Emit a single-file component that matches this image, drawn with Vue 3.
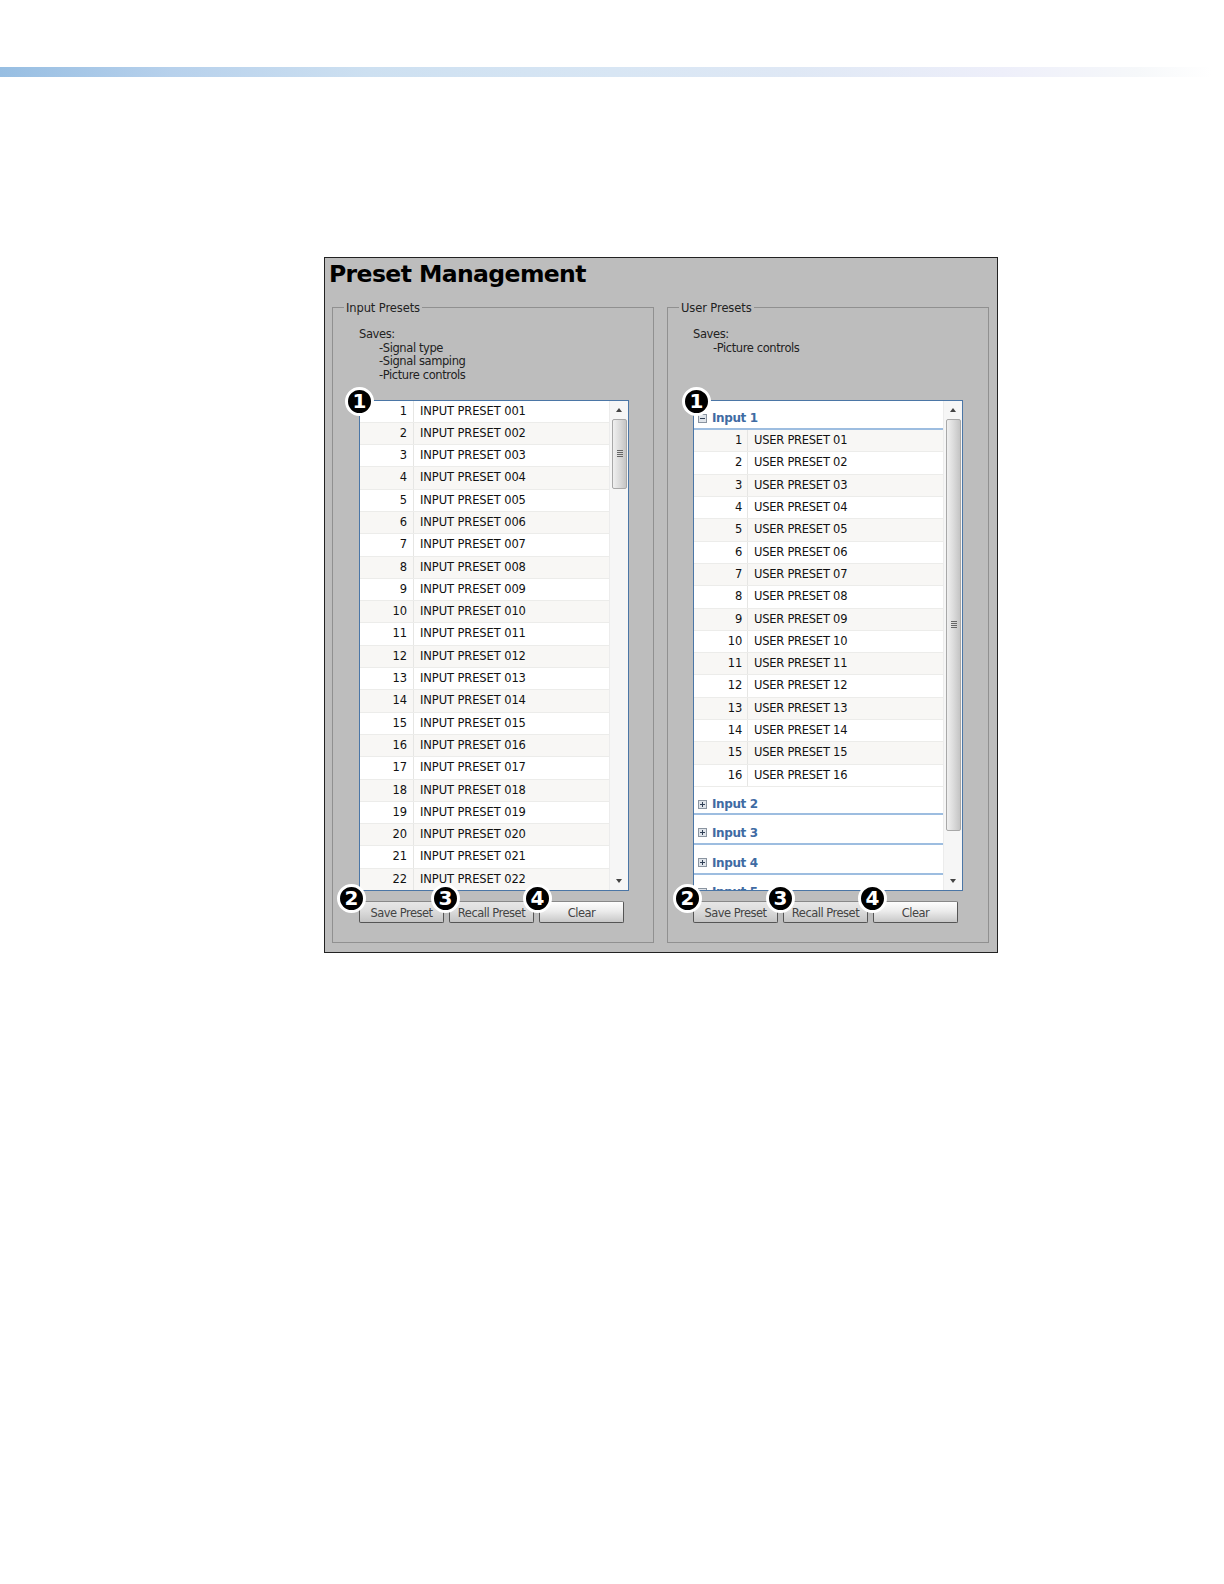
<script setup>
const inputRows = Array.from({ length: 22 }, (_, i) => ({ n: i + 1, name: 'INPUT PRESET ' + String(i + 1).padStart(3, '0') }))
const userRows = Array.from({ length: 16 }, (_, i) => ({ n: i + 1, name: 'USER PRESET ' + String(i + 1).padStart(2, '0') }))
const closedGroups = ['Input 2', 'Input 3', 'Input 4', 'Input 5']
const buttons = [
  { label: 'Save Preset', badge: 2 },
  { label: 'Recall Preset', badge: 3 },
  { label: 'Clear', badge: 4 }
]
</script>

<template>
  <div class="page">
    <div class="bar"></div>
    <section class="panel">
      <h1 class="title">Preset Management</h1>
      <div class="columns">
        <fieldset class="group">
          <legend>Input Presets</legend>
          <div class="saves">
            <div>Saves:</div>
            <div class="ind">-Signal type</div>
            <div class="ind">-Signal samping</div>
            <div class="ind">-Picture controls</div>
          </div>
          <div class="list">
            <span class="badge badge-list">1</span>
            <div class="rows">
              <div v-for="r in inputRows" :key="r.n" class="row">
                <span class="num">{{ r.n }}</span>
                <span class="name">{{ r.name }}</span>
              </div>
            </div>
            <div class="scroll">
              <span class="arrow up"></span>
              <div class="thumb thumb-short"><span class="grip"></span></div>
              <span class="arrow down"></span>
            </div>
          </div>
          <div class="buttons">
            <div v-for="b in buttons" :key="b.label" class="btn-wrap">
              <span class="badge badge-btn">{{ b.badge }}</span>
              <button class="btn" type="button">{{ b.label }}</button>
            </div>
          </div>
        </fieldset>

        <fieldset class="group">
          <legend>User Presets</legend>
          <div class="saves">
            <div>Saves:</div>
            <div class="ind">-Picture controls</div>
          </div>
          <div class="list">
            <span class="badge badge-list">1</span>
            <div class="rows">
              <div class="tree-head">
                <svg class="tree-icon" viewBox="0 0 9 9" width="9" height="9">
                  <rect x="0.5" y="0.5" width="8" height="8" fill="#dfe4ea" stroke="#8a94a0" />
                  <path d="M2 4.5H7" stroke="#2f3f55" />
                </svg>
                Input 1
              </div>
              <div v-for="r in userRows" :key="r.n" class="row">
                <span class="num">{{ r.n }}</span>
                <span class="name">{{ r.name }}</span>
              </div>
              <div v-for="g in closedGroups" :key="g" class="tree-head">
                <svg class="tree-icon" viewBox="0 0 9 9" width="9" height="9">
                  <rect x="0.5" y="0.5" width="8" height="8" fill="#dfe4ea" stroke="#8a94a0" />
                  <path d="M2 4.5H7M4.5 2V7" stroke="#2f3f55" />
                </svg>
                {{ g }}
              </div>
            </div>
            <div class="scroll">
              <span class="arrow up"></span>
              <div class="thumb thumb-long"><span class="grip"></span></div>
              <span class="arrow down"></span>
            </div>
          </div>
          <div class="buttons">
            <div v-for="b in buttons" :key="b.label" class="btn-wrap">
              <span class="badge badge-btn">{{ b.badge }}</span>
              <button class="btn" type="button">{{ b.label }}</button>
            </div>
          </div>
        </fieldset>
      </div>
    </section>
  </div>
</template>

<style>
html, body { margin: 0; background: #fff; }
</style>

<style scoped>
.page {
  width: 1224px;
  height: 1584px;
  padding-top: 67px;
  box-sizing: border-box;
  overflow: hidden;
  font-family: "DejaVu Sans", sans-serif;
  background: #fff;
}
.bar {
  height: 10px;
  background: linear-gradient(90deg, #97bee2 0%, #b7d1ec 14%, #cde0f1 30%, #d8e6f4 50%, #dfe8f5 65%, #eeeffa 82%, #f6f8fa 93%, #ffffff 99%);
}
.panel {
  box-sizing: border-box;
  width: 674px;
  height: 696px;
  margin: 180px 0 0 324px;
  border: 1px solid #222;
  background: #bdbdbd;
  padding: 0 7px;
  color: #222;
}
.title {
  margin: 0 0 0 -3px;
  height: 33px;
  padding-top: 1px;
  font-size: 23.5px;
  letter-spacing: -0.6px;
  line-height: 31px;
  font-weight: 700;
  color: #000;
  white-space: nowrap;
}
.columns {
  display: flex;
  gap: 13px;
  margin-top: 7px;
}
.group {
  box-sizing: border-box;
  position: relative;
  flex: none;
  width: 322px;
  height: 644px;
  margin: 0;
  padding: 0 0 0 26px;
  border: 1px solid #909090;
  min-width: 0;
}
.group + .group { padding-left: 25px; }
legend {
  margin-left: -15px;
  padding: 2px 2px 0;
  font-size: 11.5px;
  line-height: 14px;
  letter-spacing: -0.1px;
  color: #222;
}
.group + .group legend { margin-left: -14px; }
.saves {
  height: 84.5px;
  padding-top: 13px;
  box-sizing: border-box;
  font-size: 11.5px;
  letter-spacing: -0.4px;
  line-height: 13.7px;
  color: #222;
}
.ind { padding-left: 20px; }
.list {
  position: relative;
  box-sizing: border-box;
  display: flex;
  width: 270px;
  height: 491px;
  border: 1px solid #4b76a6;
  background: #fff;
}
.rows {
  flex: 1;
  min-width: 0;
  overflow: hidden;
}
.row {
  box-sizing: border-box;
  display: flex;
  height: 22.3px;
  background: #fff;
  border-bottom: 1px solid #ececea;
  font-size: 11.5px;
  line-height: 21.3px;
  letter-spacing: -0.1px;
  color: #111;
}
.group + .group .row { letter-spacing: -0.25px; }
.row:nth-child(even) { background: #f8f7f5; }
.num {
  box-sizing: border-box;
  flex: none;
  width: 54px;
  padding-right: 6px;
  text-align: right;
  border-right: 1px solid #e6e6e4;
}
.group + .group .num { padding-right: 5px; }
.name {
  padding-left: 6px;
  white-space: nowrap;
}
.tree-head {
  box-sizing: border-box;
  display: flex;
  align-items: center;
  gap: 5px;
  height: 29.7px;
  padding: 8px 0 0 4px;
  border-bottom: 2px solid #9dbde0;
  font-size: 12px;
  font-weight: 700;
  letter-spacing: -0.4px;
  color: #3f6ba3;
  white-space: nowrap;
}
.row + .tree-head { height: 28.2px; }
.tree-icon { flex: none; }
.scroll {
  position: relative;
  flex: none;
  width: 19px;
  background: #f6f6f6;
  border-left: 1px solid #ececec;
  box-sizing: border-box;
}
.arrow {
  position: absolute;
  left: 6px;
  width: 0;
  height: 0;
  border-left: 3.5px solid transparent;
  border-right: 3.5px solid transparent;
}
.arrow.up { top: 7px; border-bottom: 4px solid #444; }
.arrow.down { bottom: 7px; border-top: 4px solid #444; }
.thumb {
  position: absolute;
  left: 2px;
  width: 15px;
  box-sizing: border-box;
  top: 18px;
  border: 1px solid #a8a8a8;
  border-radius: 2px;
  background: linear-gradient(90deg, #f0f0f0, #d9d9d9 55%, #c4c4c4);
  display: flex;
  align-items: center;
  justify-content: center;
}
.thumb-short { height: 70px; }
.thumb-long { height: 412px; }
.grip {
  width: 6px;
  height: 7px;
  background: repeating-linear-gradient(180deg, #666 0, #666 1px, transparent 1px, transparent 2px);
}
.buttons {
  display: flex;
  gap: 5px;
  margin-top: 10px;
}
.btn-wrap { position: relative; }
.btn {
  display: block;
  box-sizing: border-box;
  width: 85px;
  height: 22px;
  padding: 3px 0 0;
  border: 1px solid #555;
  border-top-color: #888;
  border-radius: 2px;
  background: linear-gradient(180deg, #fdfdfd 0%, #ececec 45%, #c8c8c8 100%);
  font-family: "DejaVu Sans", sans-serif;
  font-size: 11.5px;
  letter-spacing: -0.5px;
  color: #444;
}
.btn-wrap:first-child .btn,
.btn-wrap:nth-child(2) .btn { background: linear-gradient(180deg, #e6e6e6 0%, #dcdcdc 45%, #c4c4c4 100%); }
.badge {
  position: absolute;
  z-index: 2;
  box-sizing: border-box;
  width: 29px;
  height: 29px;
  border-radius: 50%;
  border: 3px solid #fff;
  background: #000;
  color: #fff;
  font-size: 20px;
  font-weight: 700;
  line-height: 23px;
  text-align: center;
}
.badge-list { left: -15px; top: -14px; }
.group + .group .badge-list { left: -12px; }
.badge-btn { left: -22px; top: -17px; }
.btn-wrap:nth-child(2) .badge-btn { left: -18px; }
.btn-wrap:nth-child(3) .badge-btn { left: -16px; }
.group + .group .btn-wrap:nth-child(1) .badge-btn { left: -20px; }
.group + .group .btn-wrap:nth-child(2) .badge-btn { left: -17px; }
.group + .group .btn-wrap:nth-child(3) .badge-btn { left: -15px; }
</style>
